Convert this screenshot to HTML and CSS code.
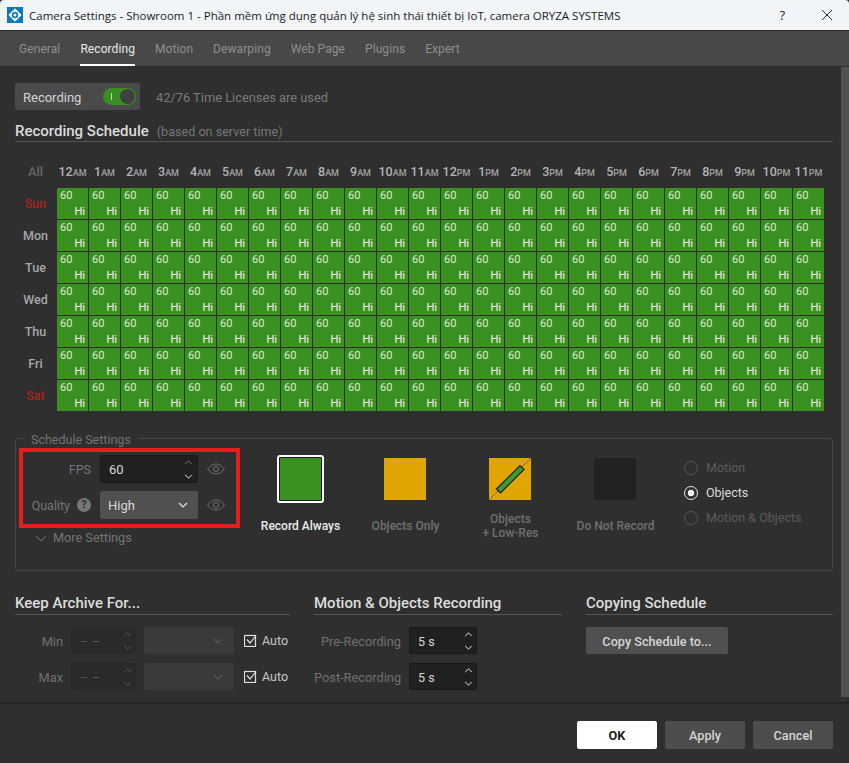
FILE: index.html
```html
<!DOCTYPE html>
<html lang="en">
<head>
<meta charset="utf-8">
<title>Camera Settings</title>
<link rel="stylesheet" href="styles.css">
</head>
<body>
<div class="window">
  <header class="titlebar">
    <svg class="logo" viewBox="0 0 16 16"><rect width="16" height="16" fill="#0b78bd"/><path d="M8 1.8 14.2 8 8 14.2 1.8 8Z" fill="#fff" stroke="#fff" stroke-linejoin="round"/><circle cx="8" cy="8" r="3.2" fill="#0b78bd"/><circle cx="8" cy="8" r="1.5" fill="#fff"/></svg>
    <span class="title">Camera Settings - Showroom 1 - Phần mềm ứng dụng quản lý hệ sinh thái thiết bị IoT, camera ORYZA SYSTEMS</span>
    <span class="help-btn">?</span>
    <svg class="close" viewBox="0 0 10 10"><path d="M0 0 10 10M10 0 0 10" stroke="#222" stroke-width="1" fill="none"/></svg>
  </header>
  <nav class="tabs">
    <span class="tab">General</span>
    <span class="tab active">Recording</span>
    <span class="tab">Motion</span>
    <span class="tab">Dewarping</span>
    <span class="tab">Web Page</span>
    <span class="tab">Plugins</span>
    <span class="tab">Expert</span>
  </nav>
  <div class="content">
    <main class="main">
      <div class="rec-row">
        <div class="rec-btn">
          <span class="rec-text">Recording</span>
          <span class="toggle"><span class="toggle-i"></span><span class="toggle-knob"></span></span>
        </div>
        <span class="licenses">42/76 Time Licenses are used</span>
      </div>
      <h2 class="sched-head"><span>Recording Schedule</span><small>(based on server time)</small></h2>
      <div class="grid">
        <div class="all">All</div>
        <div class="hr">12<small>AM</small></div><div class="hr">1<small>AM</small></div><div class="hr">2<small>AM</small></div><div class="hr">3<small>AM</small></div><div class="hr">4<small>AM</small></div><div class="hr">5<small>AM</small></div><div class="hr">6<small>AM</small></div><div class="hr">7<small>AM</small></div><div class="hr">8<small>AM</small></div><div class="hr">9<small>AM</small></div><div class="hr">10<small>AM</small></div><div class="hr">11<small>AM</small></div><div class="hr">12<small>PM</small></div><div class="hr">1<small>PM</small></div><div class="hr">2<small>PM</small></div><div class="hr">3<small>PM</small></div><div class="hr">4<small>PM</small></div><div class="hr">5<small>PM</small></div><div class="hr">6<small>PM</small></div><div class="hr">7<small>PM</small></div><div class="hr">8<small>PM</small></div><div class="hr">9<small>PM</small></div><div class="hr">10<small>PM</small></div><div class="hr">11<small>PM</small></div>
        <div class="day red">Sun</div>
        <div class="c">60<b>Hi</b></div><div class="c">60<b>Hi</b></div><div class="c">60<b>Hi</b></div><div class="c">60<b>Hi</b></div><div class="c">60<b>Hi</b></div><div class="c">60<b>Hi</b></div><div class="c">60<b>Hi</b></div><div class="c">60<b>Hi</b></div><div class="c">60<b>Hi</b></div><div class="c">60<b>Hi</b></div><div class="c">60<b>Hi</b></div><div class="c">60<b>Hi</b></div><div class="c">60<b>Hi</b></div><div class="c">60<b>Hi</b></div><div class="c">60<b>Hi</b></div><div class="c">60<b>Hi</b></div><div class="c">60<b>Hi</b></div><div class="c">60<b>Hi</b></div><div class="c">60<b>Hi</b></div><div class="c">60<b>Hi</b></div><div class="c">60<b>Hi</b></div><div class="c">60<b>Hi</b></div><div class="c">60<b>Hi</b></div><div class="c">60<b>Hi</b></div>
        <div class="day">Mon</div>
        <div class="c">60<b>Hi</b></div><div class="c">60<b>Hi</b></div><div class="c">60<b>Hi</b></div><div class="c">60<b>Hi</b></div><div class="c">60<b>Hi</b></div><div class="c">60<b>Hi</b></div><div class="c">60<b>Hi</b></div><div class="c">60<b>Hi</b></div><div class="c">60<b>Hi</b></div><div class="c">60<b>Hi</b></div><div class="c">60<b>Hi</b></div><div class="c">60<b>Hi</b></div><div class="c">60<b>Hi</b></div><div class="c">60<b>Hi</b></div><div class="c">60<b>Hi</b></div><div class="c">60<b>Hi</b></div><div class="c">60<b>Hi</b></div><div class="c">60<b>Hi</b></div><div class="c">60<b>Hi</b></div><div class="c">60<b>Hi</b></div><div class="c">60<b>Hi</b></div><div class="c">60<b>Hi</b></div><div class="c">60<b>Hi</b></div><div class="c">60<b>Hi</b></div>
        <div class="day">Tue</div>
        <div class="c">60<b>Hi</b></div><div class="c">60<b>Hi</b></div><div class="c">60<b>Hi</b></div><div class="c">60<b>Hi</b></div><div class="c">60<b>Hi</b></div><div class="c">60<b>Hi</b></div><div class="c">60<b>Hi</b></div><div class="c">60<b>Hi</b></div><div class="c">60<b>Hi</b></div><div class="c">60<b>Hi</b></div><div class="c">60<b>Hi</b></div><div class="c">60<b>Hi</b></div><div class="c">60<b>Hi</b></div><div class="c">60<b>Hi</b></div><div class="c">60<b>Hi</b></div><div class="c">60<b>Hi</b></div><div class="c">60<b>Hi</b></div><div class="c">60<b>Hi</b></div><div class="c">60<b>Hi</b></div><div class="c">60<b>Hi</b></div><div class="c">60<b>Hi</b></div><div class="c">60<b>Hi</b></div><div class="c">60<b>Hi</b></div><div class="c">60<b>Hi</b></div>
        <div class="day">Wed</div>
        <div class="c">60<b>Hi</b></div><div class="c">60<b>Hi</b></div><div class="c">60<b>Hi</b></div><div class="c">60<b>Hi</b></div><div class="c">60<b>Hi</b></div><div class="c">60<b>Hi</b></div><div class="c">60<b>Hi</b></div><div class="c">60<b>Hi</b></div><div class="c">60<b>Hi</b></div><div class="c">60<b>Hi</b></div><div class="c">60<b>Hi</b></div><div class="c">60<b>Hi</b></div><div class="c">60<b>Hi</b></div><div class="c">60<b>Hi</b></div><div class="c">60<b>Hi</b></div><div class="c">60<b>Hi</b></div><div class="c">60<b>Hi</b></div><div class="c">60<b>Hi</b></div><div class="c">60<b>Hi</b></div><div class="c">60<b>Hi</b></div><div class="c">60<b>Hi</b></div><div class="c">60<b>Hi</b></div><div class="c">60<b>Hi</b></div><div class="c">60<b>Hi</b></div>
        <div class="day">Thu</div>
        <div class="c">60<b>Hi</b></div><div class="c">60<b>Hi</b></div><div class="c">60<b>Hi</b></div><div class="c">60<b>Hi</b></div><div class="c">60<b>Hi</b></div><div class="c">60<b>Hi</b></div><div class="c">60<b>Hi</b></div><div class="c">60<b>Hi</b></div><div class="c">60<b>Hi</b></div><div class="c">60<b>Hi</b></div><div class="c">60<b>Hi</b></div><div class="c">60<b>Hi</b></div><div class="c">60<b>Hi</b></div><div class="c">60<b>Hi</b></div><div class="c">60<b>Hi</b></div><div class="c">60<b>Hi</b></div><div class="c">60<b>Hi</b></div><div class="c">60<b>Hi</b></div><div class="c">60<b>Hi</b></div><div class="c">60<b>Hi</b></div><div class="c">60<b>Hi</b></div><div class="c">60<b>Hi</b></div><div class="c">60<b>Hi</b></div><div class="c">60<b>Hi</b></div>
        <div class="day">Fri</div>
        <div class="c">60<b>Hi</b></div><div class="c">60<b>Hi</b></div><div class="c">60<b>Hi</b></div><div class="c">60<b>Hi</b></div><div class="c">60<b>Hi</b></div><div class="c">60<b>Hi</b></div><div class="c">60<b>Hi</b></div><div class="c">60<b>Hi</b></div><div class="c">60<b>Hi</b></div><div class="c">60<b>Hi</b></div><div class="c">60<b>Hi</b></div><div class="c">60<b>Hi</b></div><div class="c">60<b>Hi</b></div><div class="c">60<b>Hi</b></div><div class="c">60<b>Hi</b></div><div class="c">60<b>Hi</b></div><div class="c">60<b>Hi</b></div><div class="c">60<b>Hi</b></div><div class="c">60<b>Hi</b></div><div class="c">60<b>Hi</b></div><div class="c">60<b>Hi</b></div><div class="c">60<b>Hi</b></div><div class="c">60<b>Hi</b></div><div class="c">60<b>Hi</b></div>
        <div class="day red">Sat</div>
        <div class="c">60<b>Hi</b></div><div class="c">60<b>Hi</b></div><div class="c">60<b>Hi</b></div><div class="c">60<b>Hi</b></div><div class="c">60<b>Hi</b></div><div class="c">60<b>Hi</b></div><div class="c">60<b>Hi</b></div><div class="c">60<b>Hi</b></div><div class="c">60<b>Hi</b></div><div class="c">60<b>Hi</b></div><div class="c">60<b>Hi</b></div><div class="c">60<b>Hi</b></div><div class="c">60<b>Hi</b></div><div class="c">60<b>Hi</b></div><div class="c">60<b>Hi</b></div><div class="c">60<b>Hi</b></div><div class="c">60<b>Hi</b></div><div class="c">60<b>Hi</b></div><div class="c">60<b>Hi</b></div><div class="c">60<b>Hi</b></div><div class="c">60<b>Hi</b></div><div class="c">60<b>Hi</b></div><div class="c">60<b>Hi</b></div><div class="c">60<b>Hi</b></div>
      </div>

      <fieldset class="settings">
        <legend>Schedule Settings</legend>
        <div class="settings-left">
          <div class="set-row">
            <span class="set-label">FPS</span>
            <div class="spin dark wide"><span class="val">60</span>
              <span class="arrows tall"><svg viewBox="0 0 10 6"><path d="M1 5 5 1 9 5" class="dim"/></svg><svg viewBox="0 0 10 6"><path d="M1 1 5 5 9 1" class="lit"/></svg></span>
            </div>
            <svg class="eye" viewBox="0 0 18 12"><path d="M.7 6C3 2.6 6 1 9 1s6 1.6 8.3 5C15 9.4 12 11 9 11S3 9.4.7 6Z"/><circle cx="9" cy="6" r="2.6"/></svg>
          </div>
          <div class="set-row">
            <span class="set-label">Quality <i class="qmark">?</i></span>
            <div class="combo wide"><span class="val">High</span>
              <svg viewBox="0 0 10 6"><path d="M1 1 5 5 9 1" class="lit"/></svg>
            </div>
            <svg class="eye" viewBox="0 0 18 12"><path d="M.7 6C3 2.6 6 1 9 1s6 1.6 8.3 5C15 9.4 12 11 9 11S3 9.4.7 6Z"/><circle cx="9" cy="6" r="2.6"/></svg>
          </div>
          <div class="more"><svg viewBox="0 0 12 7"><path d="M1 1 6 6 11 1"/></svg><span>More Settings</span></div>
          <div class="highlight"></div>
        </div>
        <div class="brush">
          <div class="sw-box"><span class="sw-sel"><span class="sw-fill green"></span></span></div>
          <div class="sw-label on">Record Always</div>
        </div>
        <div class="brush">
          <div class="sw-box"><span class="sw amber"></span></div>
          <div class="sw-label">Objects Only</div>
        </div>
        <div class="brush">
          <div class="sw-box"><svg class="sw" viewBox="0 0 42 42"><rect width="42" height="42" fill="#e0a600"/><path d="M0 42 42 0" stroke="#7a6a1a" stroke-width="1"/><path d="M7.5 31 31 7.5 35 11.5 11.5 35Z" fill="#3d9a30" stroke="#1c1c1c" stroke-width="1.2"/></svg></div>
          <div class="sw-label">Objects<br>+ Low-Res</div>
        </div>
        <div class="brush">
          <div class="sw-box"><span class="sw black"></span></div>
          <div class="sw-label">Do Not Record</div>
        </div>
        <div class="radios">
          <div class="radio"><span class="circle"></span>Motion</div>
          <div class="radio on"><span class="circle"></span>Objects</div>
          <div class="radio"><span class="circle"></span>Motion &amp; Objects</div>
        </div>
      </fieldset>

      <div class="bottom">
        <section>
          <h3>Keep Archive For...</h3>
          <div class="form-row">
            <span class="lbl l48">Min</span>
            <div class="spin off"><span class="val">– –</span><span class="arrows"><svg viewBox="0 0 10 6"><path d="M1 5 5 1 9 5" class="faint"/></svg><svg viewBox="0 0 10 6"><path d="M1 1 5 5 9 1" class="faint"/></svg></span></div>
            <div class="combo off"><span class="val"></span><svg viewBox="0 0 10 6"><path d="M1 1 5 5 9 1" class="faint"/></svg></div>
            <span class="check"><svg viewBox="0 0 13 13"><rect x=".5" y="1.5" width="11" height="11"/><path d="M3 5.5 6 9 12 1.5"/></svg>Auto</span>
          </div>
          <div class="form-row">
            <span class="lbl l48">Max</span>
            <div class="spin off"><span class="val">– –</span><span class="arrows"><svg viewBox="0 0 10 6"><path d="M1 5 5 1 9 5" class="faint"/></svg><svg viewBox="0 0 10 6"><path d="M1 1 5 5 9 1" class="faint"/></svg></span></div>
            <div class="combo off"><span class="val"></span><svg viewBox="0 0 10 6"><path d="M1 1 5 5 9 1" class="faint"/></svg></div>
            <span class="check"><svg viewBox="0 0 13 13"><rect x=".5" y="1.5" width="11" height="11"/><path d="M3 5.5 6 9 12 1.5"/></svg>Auto</span>
          </div>
        </section>
        <section>
          <h3>Motion &amp; Objects Recording</h3>
          <div class="form-row">
            <span class="lbl l87">Pre-Recording</span>
            <div class="spin dark"><span class="val small">5 s</span><span class="arrows"><svg viewBox="0 0 10 6"><path d="M1 5 5 1 9 5" class="lit"/></svg><svg viewBox="0 0 10 6"><path d="M1 1 5 5 9 1" class="lit"/></svg></span></div>
          </div>
          <div class="form-row">
            <span class="lbl l87">Post-Recording</span>
            <div class="spin dark"><span class="val small">5 s</span><span class="arrows"><svg viewBox="0 0 10 6"><path d="M1 5 5 1 9 5" class="lit"/></svg><svg viewBox="0 0 10 6"><path d="M1 1 5 5 9 1" class="lit"/></svg></span></div>
          </div>
        </section>
        <section>
          <h3>Copying Schedule</h3>
          <div class="form-row"><button class="btn copy">Copy Schedule to...</button></div>
        </section>
      </div>
    </main>
    <div class="scrollbar"></div>
  </div>
  <footer class="footer">
    <button class="btn primary">OK</button>
    <button class="btn">Apply</button>
    <button class="btn">Cancel</button>
  </footer>
</div>
</body>
</html>
```
FILE: styles.css
```css
* { box-sizing: border-box; }
html, body { margin: 0; height: 100%; background: #1a1a1a; }
body { font-family: Roboto, "Liberation Sans", sans-serif; font-size: 13px; color: #ccc; overflow: hidden; }
.window { width: 849px; height: 763px; display: flex; flex-direction: column; background: #2f2f2f; }

.titlebar { height: 31px; flex: none; display: flex; align-items: center; background: #f2f5f8; border-bottom: 1px solid #2a2a2a; border-radius: 4px 4px 0 0; padding-left: 7px; }
.logo { width: 16px; height: 16px; flex: none; }
.title { font-family: "Open Sans", "Noto Sans", sans-serif; font-size: 11.5px; color: #1b1b1b; margin-left: 6px; flex: 1; white-space: nowrap; }
.help-btn { font-family: "Open Sans", sans-serif; font-size: 13px; color: #222; margin-right: 37px; }
.close { width: 10px; height: 10px; margin: 0 17px 1px 0; flex: none; }

.tabs { height: 35px; flex: none; display: flex; gap: 20px; padding-left: 19px; background: #484848; font-size: 12px; letter-spacing: .08px; }
.tab { color: #8f8f8f; line-height: 37px; }
.tab.active { color: #e8e8e8; border-bottom: 2px solid #fff; }

.content { display: flex; height: 636px; flex: none; }
.main { width: 841px; flex: none; padding: 17px 0 0 15px; }
.scrollbar { width: 8px; margin-top: 1px; height: 630px; background: #505050; }

.rec-row { display: flex; align-items: center; gap: 16px; height: 27px; }
.rec-btn { width: 125px; height: 27px; background: #4a4a4a; border-radius: 2px; display: flex; align-items: center; justify-content: space-between; padding: 0 4px 0 8px; color: #d4d4d4; }
.rec-text { padding-top: 2px; }
.toggle { width: 33px; height: 17px; border-radius: 9px; background: #3a8f22; position: relative; display: block; }
.toggle-i { position: absolute; left: 8px; top: 5px; width: 1px; height: 7px; background: #b4dca6; }
.toggle-knob { position: absolute; right: 1px; top: 1px; width: 15px; height: 15px; border-radius: 50%; background: #404040; }
.licenses { color: #7b7b7b; font-size: 12.85px; padding-top: 2px; }

.sched-head { margin: 0; width: 818px; height: 32px; border-bottom: 1px solid #565656; font-size: 15px; font-weight: 500; color: #dcdcdc; display: flex; align-items: flex-end; padding-bottom: 1px; gap: 8px; }
.sched-head small { font-size: 12.6px; font-weight: 400; color: #767676; padding-bottom: 1.5px; }

.grid { display: grid; grid-template-columns: 41px repeat(24, 31px); grid-template-rows: 27px repeat(7, 31px); gap: 1px; margin-top: 18px; }
.all { color: #666; font-size: 13px; font-weight: 500; text-align: center; line-height: 24px; }
.hr { font-size: 12.5px; font-weight: 500; color: #b4b4b4; text-align: center; line-height: 24px; white-space: nowrap; }
.hr small { font-size: 9px; font-weight: 500; color: #a0a0a0; }
.day { font-size: 12.5px; font-weight: 500; color: #a8a8a8; text-align: center; line-height: 32px; }
.day.red { color: #b02020; }
.c { background: #3b911f; color: #d8ecd0; font-size: 11px; line-height: 15px; padding: 0 3px; display: flex; flex-direction: column; }
.c b { font-weight: 400; text-align: right; margin-top: 1px; color: #f4f8f0; }

.settings { width: 818px; height: 140px; margin: 20px 0 0; padding: 10px 0 0; border: 1px solid #474747; border-radius: 3px; display: flex; align-items: flex-start; min-inline-size: 0; }
.settings legend { margin-left: 7px; padding: 0 8px; height: 14px; line-height: 18px; font-size: 12.5px; color: #737373; }
.settings-left { width: 232px; flex: none; position: relative; display: flex; flex-direction: column; gap: 8px; }
.set-row { display: flex; align-items: center; height: 28px; }
.set-label { width: 75px; flex: none; text-align: right; color: #767676; font-size: 12.5px; white-space: nowrap; display: flex; justify-content: flex-end; align-items: center; }
.qmark { width: 14px; height: 14px; border-radius: 50%; background: #767676; color: #2f2f2f; font: 700 11px/14px Roboto, sans-serif; text-align: center; margin-left: 7px; }
.eye { width: 18px; height: 12px; margin-left: 9px; flex: none; fill: none; stroke: #6f6f6f; stroke-width: 1; }
.more { display: flex; align-items: center; height: 16px; margin-top: 2px; padding-left: 19px; color: #757575; gap: 6px; font-size: 12.7px; }
.more svg { width: 12px; height: 7px; margin-top: 2px; fill: none; stroke: #757575; stroke-width: 1; }
.highlight { position: absolute; left: 3px; top: -7px; width: 221px; height: 80px; border: 4px solid #e81e1e; pointer-events: none; }

.spin, .combo { height: 28px; border-radius: 2px; display: flex; align-items: center; justify-content: space-between; margin-left: 9px; padding-left: 8px; flex: none; }
.wide { width: 98px; }
.spin.dark { background: #202020; border: 1px solid #181818; padding-right: 3px; width: 68px; margin-left: 8px; }
.spin.dark.wide { width: 98px; margin-left: 9px; padding-right: 4px; }
.spin .val, .combo .val { color: #d8d8d8; font-size: 13px; }
.val.small { font-size: 12.5px; padding-top: 2px; }
.arrows { display: flex; flex-direction: column; gap: 8px; }
.arrows.tall { gap: 9px; }
.arrows svg { display: block; width: 9px; height: 5px; }
.combo { background: #505050; padding-right: 10px; }
.combo svg { width: 10px; height: 6px; }
path.lit, path.dim, path.faint { fill: none; stroke-width: 1.2; }
path.lit { stroke: #e6e6e6; }
path.dim { stroke: #7a7a7a; }
path.faint { stroke: #585858; }

.brush { width: 105px; flex: none; display: flex; flex-direction: column; align-items: center; }
.sw-box { height: 48px; display: flex; align-items: center; justify-content: center; padding-right: 2px; }
.sw-sel { width: 47px; height: 48px; margin-right: -2px; border: 2px solid #fff; border-radius: 3px; padding: 1px; background: #1e1e1e; display: block; }
.sw-fill { display: block; width: 100%; height: 100%; }
.green { background: #3b911f; }
.sw { width: 42px; height: 42px; display: block; }
.amber { background: #e0a600; }
.black { background: #222; }
.sw-label { height: 28px; margin-top: 9px; display: flex; align-items: center; justify-content: center; text-align: center; font-size: 12px; font-weight: 500; line-height: 14px; color: #6f6f6f; }
.sw-label.on { color: #ececec; }

.radios { margin-left: 16px; display: flex; flex-direction: column; }
.radio { height: 25px; display: flex; align-items: center; gap: 8px; color: #5c5c5c; font-size: 12.5px; }
.radio .circle { width: 14px; height: 14px; border-radius: 50%; border: 1px solid #565656; display: block; }
.radio.on { color: #dcdcdc; }
.radio.on .circle { border: 1.5px solid #e8e8e8; background: radial-gradient(circle, #f0f0f0 0 3.1px, transparent 3.6px); }

.bottom { display: grid; grid-template-columns: 275px 248px 247px; gap: 24px; margin-top: 15px; width: 818px; }
.bottom h3 { margin: 0 0 12px; height: 29px; padding-top: 8px; line-height: 18px; font-size: 15px; font-weight: 500; color: #dcdcdc; border-bottom: 1px solid #565656; }
.form-row { display: flex; align-items: center; height: 27px; margin-bottom: 9px; }
.form-row .spin, .form-row .combo { height: 27px; }
.lbl { flex: none; text-align: right; color: #6f6f6f; font-size: 12.8px; white-space: nowrap; padding-top: 2px; }
.l48 { width: 48px; }
.l87 { width: 87px; }
.spin.off { width: 65px; margin-left: 8px; background: #2a2a2a; border: 1px solid #292929; padding-right: 3px; }
.spin.off .val { color: #555; font-size: 13px; padding-top: 1px; }
.combo.off { width: 90px; margin-left: 8px; background: #3a3a3a; padding-right: 11px; }
.check { display: flex; align-items: center; margin-left: 10px; gap: 5px; color: #c8c8c8; font-size: 12.5px; }
.check svg { width: 13px; height: 13px; fill: none; stroke: #e0e0e0; stroke-width: 1.2; }

.btn { height: 28px; width: 80px; border: 0; border-radius: 2px; background: #4d4d4d; color: #d4d4d4; font: 500 12.7px Roboto, sans-serif; padding: 0; }
.copy { width: 142px; height: 27px; background: #505050; padding-top: 2px; }
.primary { background: #fff; color: #1c1c1c; font-weight: 700; }

.footer { flex: 1; border-top: 2px solid #242424; background: #2f2f2f; display: flex; justify-content: flex-end; gap: 8px; padding: 17px 16px 0 0; }
```
